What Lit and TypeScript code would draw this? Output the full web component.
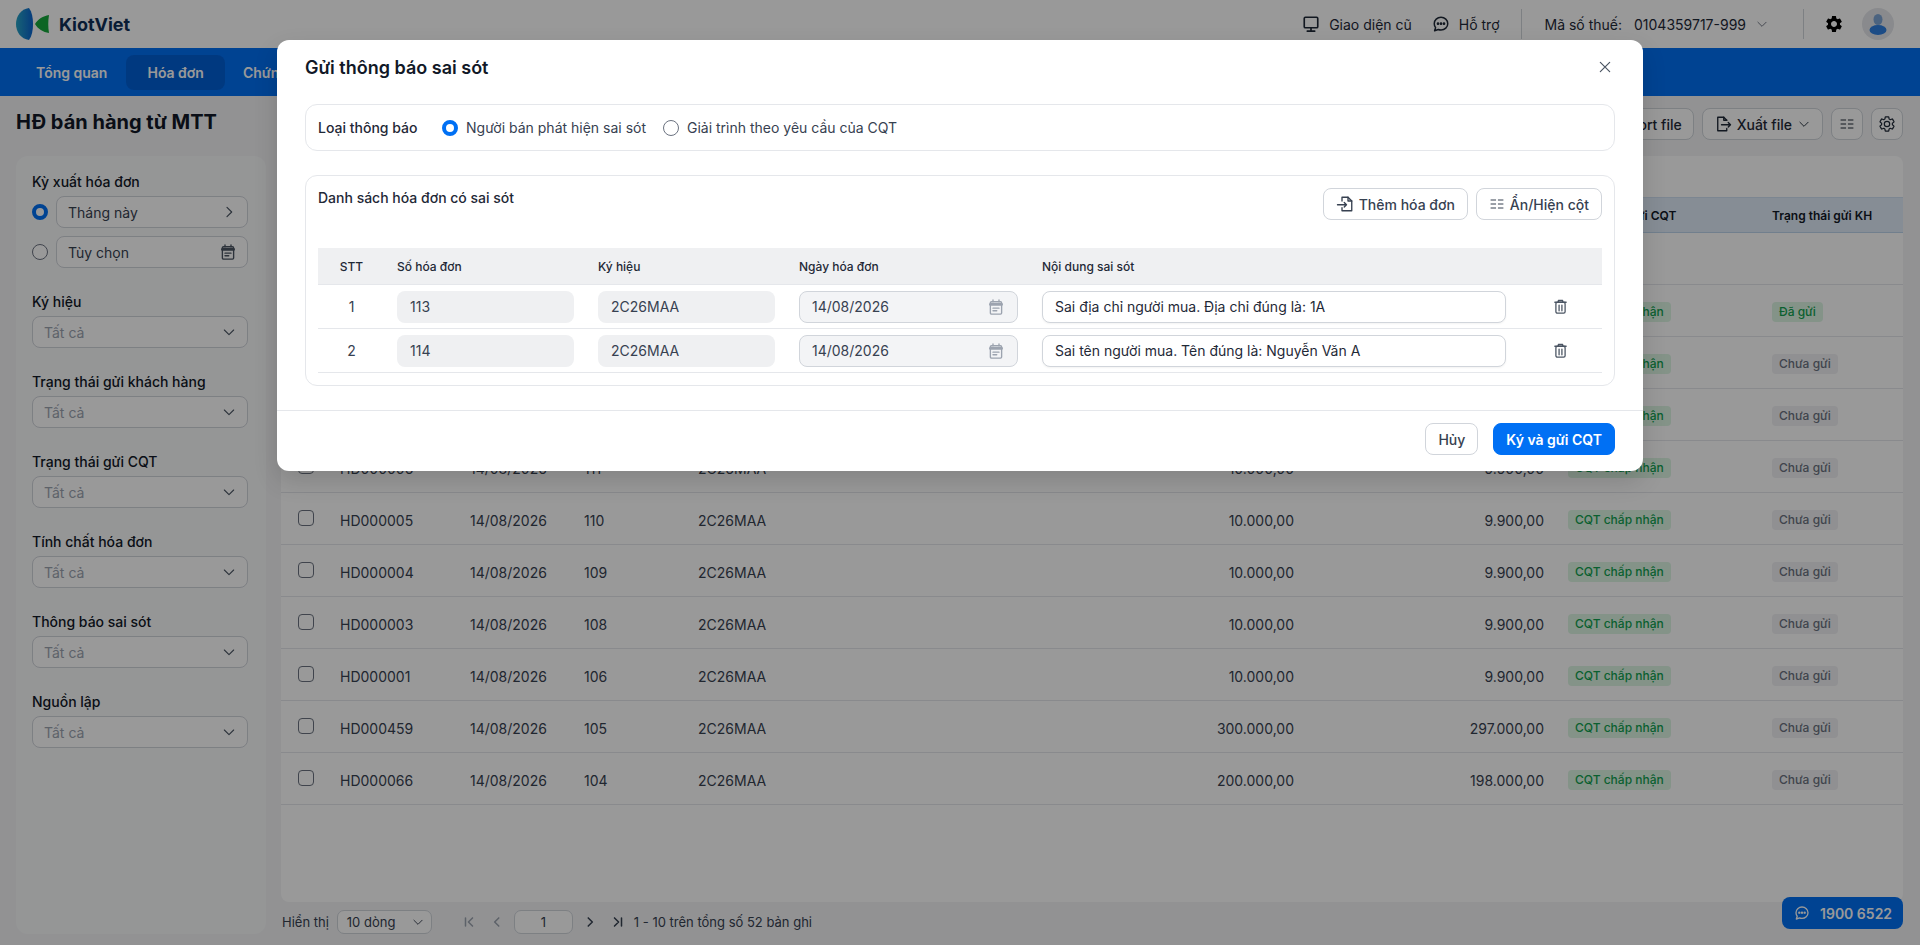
import { LitElement, html, css, svg } from "lit";
import { customElement } from "lit/decorators.js";

const icon = (size: number, body: unknown, fill = "none") => html`<svg
  width=${size} height=${size} viewBox="0 0 24 24" fill=${fill} stroke=${fill === "none" ? "currentColor" : "none"}
  stroke-width="1.8" stroke-linecap="round" stroke-linejoin="round">${body}</svg>`;

const chevronDown = svg`<path d="M5 9l7 7 7-7" stroke-width="1.6"/>`;
const chevronRight = svg`<path d="M9 5l7 7-7 7"/>`;
const chevronLeft = svg`<path d="M15 5l-7 7 7 7" stroke-width="2.6"/>`;
const chevronNext = svg`<path d="M9 5l7 7-7 7" stroke-width="2.6"/>`;
const calendar = svg`<rect x="4.5" y="5" width="15" height="16.5" rx="1.5"/><path d="M4.5 8.5h15" stroke-width="3.5"/><path d="M8 2.5v2.5M16 2.5v2.5"/><path d="M8 13.5h8M8 17h5"/>`;
const trash = svg`<path d="M4 6h16M9 6V3.5h6V6"/><rect x="5.5" y="6" width="13" height="15.5" rx="2"/><path d="M10 10v8M14 10v8"/>`;
const columns = svg`<path d="M3 6h7M14 6h7M3 12h7M14 12h7M3 18h7M14 18h7" stroke-width="1.5"/>`;
const fileIn = svg`<path d="M8 8V3h8l5 5v13H8v-4"/><path d="M16 3v5h5"/><path d="M2 13h12M11 10l3 3-3 3"/>`;
const fileOut = svg`<path d="M17 7l-4-4H5v18h12v-3"/><path d="M13 3v4h4"/><path d="M10 13h12M19 10l3 3-3 3"/>`;
const close = svg`<path d="M5 5l14 14M19 5L5 19"/>`;
const monitor = svg`<rect x="3" y="3" width="18" height="14" rx="1.5" stroke-width="2.2"/><path d="M12 17v4M7 21.5h10" stroke-width="2.2"/>`;
const chat = svg`<path d="M12 3c5 0 9 3.8 9 8.5S17 20 12 20c-1.3 0-2.500-.2-3.600-.7L3.500 21l1.300-4.200C3.700 15.300 3 13.500 3 11.500 3 6.800 7 3 12 3z" stroke-width="2"/><circle cx="8" cy="11.500" r=".9" fill="currentColor"/><circle cx="12" cy="11.500" r=".9" fill="currentColor"/><circle cx="16" cy="11.500" r=".9" fill="currentColor"/>`;
const gearPath = "M19.14 12.94c.04-.3.06-.61.06-.94 0-.32-.02-.64-.07-.94l2.03-1.58a.49.49 0 0 0 .12-.61l-1.92-3.32a.488.488 0 0 0-.59-.22l-2.39.96c-.5-.38-1.03-.7-1.62-.94l-.36-2.54a.484.484 0 0 0-.48-.41h-3.84c-.24 0-.43.17-.47.41l-.36 2.54c-.59.24-1.13.57-1.62.94l-2.39-.96c-.22-.08-.47 0-.59.22L2.74 8.87c-.12.21-.08.47.12.61l2.03 1.58c-.05.3-.09.63-.09.94s.02.64.07.94l-2.03 1.58a.49.49 0 0 0-.12.61l1.92 3.32c.12.22.37.29.59.22l2.39-.96c.5.38 1.03.7 1.62.94l.36 2.54c.05.24.24.41.48.41h3.84c.24 0 .44-.17.47-.41l.36-2.54c.59-.24 1.13-.56 1.62-.94l2.39.96c.22.08.47 0 .59-.22l1.92-3.32c.12-.22.07-.47-.12-.61l-2.01-1.58zM12 15.6c-1.98 0-3.6-1.62-3.6-3.6s1.62-3.6 3.6-3.6 3.6 1.62 3.6 3.6-1.62 3.6-3.6 3.6z";
const gearSolid = svg`<path fill-rule="evenodd" d=${gearPath}/>`;
const gearLine = svg`<path d=${gearPath} stroke-width="1.6"/>`;
const firstPage = svg`<path d="M6 5v14M18 5l-7 7 7 7" stroke-width="2.6"/>`;
const lastPage = svg`<path d="M18 5v14M6 5l7 7-7 7" stroke-width="2.6"/>`;

// first rows sit behind the dialog, only their status tags show
const invoices = [
  ["", "", "", "", "Đã gửi"],
  ["", "", "", "", "Chưa gửi"],
  ["", "", "", "", "Chưa gửi"],
  ["HD000006", "111", "10.000,00", "9.900,00", "Chưa gửi"],
  ["HD000005", "110", "10.000,00", "9.900,00", "Chưa gửi"],
  ["HD000004", "109", "10.000,00", "9.900,00", "Chưa gửi"],
  ["HD000003", "108", "10.000,00", "9.900,00", "Chưa gửi"],
  ["HD000001", "106", "10.000,00", "9.900,00", "Chưa gửi"],
  ["HD000459", "105", "300.000,00", "297.000,00", "Chưa gửi"],
  ["HD000066", "104", "200.000,00", "198.000,00", "Chưa gửi"],
];

const filters = ["Ký hiệu", "Trạng thái gửi khách hàng", "Trạng thái gửi CQT", "Tính chất hóa đơn", "Thông báo sai sót", "Nguồn lập"];

const errors = [
  ["1", "113", "Sai địa chỉ người mua. Địa chỉ đúng là: 1A"],
  ["2", "114", "Sai tên người mua. Tên đúng là: Nguyễn Văn A"],
];

@customElement("app-root")
export class AppRoot extends LitElement {
  static styles = css`
    :host {
      display: block;
      position: relative;
      width: 1920px;
      height: 945px;
      overflow: hidden;
      background: #f3f4f6;
      color: #1f2937;
      font-family: Inter, "Noto Sans", sans-serif;
      font-size: 14px;
    }
    svg { display: block; flex: none; }

    /* top bar */
    .top {
      height: 48px;
      background: #fff;
      display: flex;
      align-items: center;
      padding: 0 26px 0 16px;
    }
    .logo { display: flex; align-items: center; gap: 10px; }
    .logo-name { font-size: 18px; font-weight: 700; color: #0f2f57; }
    .top-right { margin-left: auto; display: flex; align-items: center; height: 100%; color: #1f2937; }
    .top-link { display: flex; align-items: center; gap: 9px; margin-right: 20px; }
    .top-link:nth-child(2) { margin-right: 21px; }
    .sep { width: 1px; height: 30px; background: #d1d5db; }
    .tax { display: flex; align-items: center; padding: 0 34px 0 23px; }
    .tax-no { margin-left: 12px; margin-right: 9px; color: #1f2937; }
    .tax svg { color: #6b7280; }
    .gear { margin: 0 18px 0 20px; color: #000; }
    .avatar {
      width: 32px; height: 32px; border-radius: 50%; background: #e5e7eb;
      display: flex; align-items: center; justify-content: center;
    }

    /* nav */
    .nav { height: 48px; background: #0070f4; display: flex; align-items: center; padding-left: 16px; gap: 20px; color: #fff; font-weight: 600; }
    .tab { height: 35px; padding: 0 20px; display: flex; align-items: center; border-radius: 8px; flex: none; }
    .tab.active { background: #0060d6; margin-left: -21px; margin-right: -22px; padding: 0 21px; }

    /* title row */
    .title-row { height: 60px; box-sizing: border-box; display: flex; align-items: flex-start; padding: 12px 17px 0 16px; }
    .page-title { font-size: 20px; font-weight: 700; line-height: 28px; color: #111827; }
    .tools { margin-left: auto; display: flex; gap: 8px; }
    .tool {
      height: 32px; box-sizing: border-box; border: 1px solid #d1d5db; border-radius: 8px; background: #fff;
      display: flex; align-items: center; gap: 5px; padding: 0 11px; font-weight: 500; color: #1f2937;
    }
    .tool.square { width: 32px; padding: 0; justify-content: center; }

    /* content */
    .content { display: grid; grid-template-columns: 250px 1622px; gap: 15px; padding: 0 16px; }
    .side { height: 778px; box-sizing: border-box; background: #f9fafb; border-radius: 12px; padding: 16px 18px 16px 16px; }
    .field-label { font-weight: 500; line-height: 20px; color: #111827; }
    .period { display: flex; align-items: center; gap: 8px; margin-top: 4px; }
    .period + .period { margin-top: 8px; }
    .radio { width: 16px; height: 16px; box-sizing: border-box; border-radius: 50%; border: 1px solid #6b7280; background: #fff; flex: none; }
    .radio.on { border: 4.5px solid #0070f4; }
    .select {
      height: 32px; box-sizing: border-box; border: 1px solid #d1d5db; border-radius: 8px; background: #fff;
      display: flex; align-items: center; justify-content: space-between; padding: 0 10px 0 11px; flex: 1;
      color: #374151;
    }
    .select.muted { color: #9ca3af; }
    .select svg { color: #4b5563; }
    .filter { margin-top: 24px; }
    .filter .select { margin-top: 4px; }

    .main { display: flex; flex-direction: column; }
    .panel { height: 746px; background: #fff; border-radius: 8px; box-sizing: border-box; padding-top: 41px; }
    .grid-row {
      display: grid;
      grid-template-columns: 59px 130px 114px 114px 200px 396px 250px 228px 131px;
      align-items: center;
      height: 52px;
      box-sizing: border-box;
      padding-top: 3px;
      border-bottom: 1px solid #e5e7eb;
      color: #374151;
    }
    .grid-row.head {
      height: 36px; padding-top: 0; background: #e0ecf8; border-top: 1px solid #cfe0f2; border-bottom: 1px solid #bcd4ec;
      font-size: 12px; font-weight: 600; color: #111827;
    }
    .right { text-align: right; }
    .pad { padding-left: 24px; }
    .check { width: 16px; height: 16px; box-sizing: border-box; border: 1px solid #6b7280; border-radius: 4px; background: #fff; margin: -5px 0 0 17px; }
    .tag { display: inline-block; height: 20px; line-height: 20px; padding: 0 7px; border-radius: 4px; font-size: 12px; font-weight: 500; white-space: nowrap; vertical-align: top; }
    .tag.ok { background: #dcf5e3; color: #12a150; }
    .tag.idle { background: #f0f1f3; color: #6b7280; }

    .pager { height: 32px; box-sizing: border-box; display: flex; align-items: center; font-size: 13px; color: #374151; padding: 7px 0 0 1px; }
    .pager .size {
      width: 95px; height: 24px; box-sizing: border-box; border: 1px solid #d1d5db; border-radius: 7px; margin-left: 8px;
      display: flex; align-items: center; justify-content: space-between; padding: 0 6px 0 9px; background: #fff;
    }
    .pg { display: flex; width: 14px; justify-content: center; color: #374151; }
    .pg.dim { color: #9ca3af; }
    .pg.first { margin-left: 30px; }
    .pg.prev { margin-left: 14px; }
    .pg.next { margin-left: 10px; }
    .pg.last { margin-left: 14px; }
    .pg-input {
      width: 59px; height: 24px; box-sizing: border-box; border: 1px solid #d1d5db; border-radius: 7px; margin-left: 10px;
      display: flex; align-items: center; justify-content: center; background: #fff;
    }
    .pg-total { margin-left: 9px; }
    .hotline {
      position: absolute; left: 1782px; top: 897px; width: 121px; height: 32px; border-radius: 8px;
      background: #0070f4; color: #fff; display: flex; align-items: center; gap: 10px; padding-left: 12px;
      box-sizing: border-box; font-weight: 600;
    }

    /* dialog */
    .overlay { position: absolute; inset: 0; background: rgba(0, 0, 0, 0.4); }
    .modal {
      position: absolute; left: 277px; top: 40px; width: 1366px; height: 431px; box-sizing: border-box;
      background: #fff; border-radius: 12px; box-shadow: 0 10px 25px rgba(0, 0, 0, 0.14);
      display: flex; flex-direction: column;
    }
    .modal-head { height: 64px; box-sizing: border-box; padding: 17px 28px 0; display: flex; justify-content: space-between; }
    .modal-title { font-size: 18px; font-weight: 600; line-height: 22px; color: #111827; }
    .modal-close { color: #4b5563; margin: 2px 2px 0 0; }
    .modal-body { padding: 0 28px; }
    .card { border: 1px solid #e5e7eb; border-radius: 12px; box-sizing: border-box; }
    .type-card { height: 47px; display: flex; align-items: center; padding: 0 12px; margin-bottom: 24px; }
    .type-label { font-weight: 500; color: #1f2937; width: 124px; }
    .opt { display: flex; align-items: center; gap: 8px; color: #374151; margin-right: 17px; }
    .list-card { height: 211px; padding: 12px; }
    .list-top { display: flex; justify-content: space-between; margin-bottom: 28px; height: 32px; }
    .list-title { font-weight: 500; line-height: 20px; font-size: 14px; color: #1f2937; }
    .list-actions { display: flex; gap: 8px; }
    .btn {
      height: 32px; box-sizing: border-box; border: 1px solid #d1d5db; border-radius: 8px; background: #fff;
      display: flex; align-items: center; gap: 5px; padding: 0 12px; font-weight: 500; color: #374151;
    }
    .row {
      display: grid; grid-template-columns: 67px 201px 201px 243px 488px 84px; align-items: center;
      box-sizing: border-box; height: 44px; border-bottom: 1px solid #e5e7eb; color: #374151;
    }
    .row.thead { height: 37px; background: #eff0f2; font-size: 12px; font-weight: 500; color: #1f2937; }
    .row > div { padding: 0 12px; }
    .row .num { padding: 0; text-align: center; }
    .cell-box {
      height: 32px; box-sizing: border-box; border-radius: 8px; display: flex; align-items: center;
      justify-content: space-between; padding: 0 13px;
    }
    .cell-box.ro { background: #eff0f2; }
    .cell-box.date { background: #f3f4f6; border: 1px solid #d1d5db; padding: 0 12px; }
    .cell-box.date svg { color: #9ca3af; }
    .cell-box.text { background: #fff; border: 1px solid #d1d5db; padding: 0 12px; box-shadow: 0 1px 2px rgba(0, 0, 0, 0.05); color: #1f2937; }
    .del { display: flex; justify-content: center; color: #4b5563; }
    .modal-foot {
      margin-top: 24px; border-top: 1px solid #e5e7eb; padding: 12px 28px 0; display: flex; justify-content: flex-end; gap: 15px;
    }
    .btn.primary { background: #0070f4; border-color: #0070f4; color: #fff; font-weight: 600; }
  `;

  private renderTop() {
    return html`
      <div class="top">
        <div class="logo">
          <svg width="33" height="32" viewBox="0 0 33 32">
            <defs>
              <linearGradient id="lens" x1="0" x2="1" y1="0" y2="0">
                <stop offset="0" stop-color="#28a4c4"/><stop offset="1" stop-color="#0a63d0"/>
              </linearGradient>
            </defs>
            <path fill="url(#lens)" d="M13 0C5 1 0 8 0 16c0 8 5 15 13 16 3-4 4-10 4-16S16 4 13 0z"/>
            <path fill="#16a83c" d="M19 16c3-5 8-8 14-9-1 6-1 12 0 18-6-1-11-4-14-9z"/>
          </svg>
          <span class="logo-name">KiotViet</span>
        </div>
        <div class="top-right">
          <div class="top-link">${icon(18, monitor)}<span>Giao diện cũ</span></div>
          <div class="top-link">${icon(18, chat)}<span>Hỗ trợ</span></div>
          <div class="sep"></div>
          <div class="tax">
            <span>Mã số thuế:</span><span class="tax-no">0104359717-999</span>${icon(14, chevronDown)}
          </div>
          <div class="sep"></div>
          <div class="gear">${icon(20, gearSolid, "currentColor")}</div>
          <div class="avatar">
            <svg width="20" height="22" viewBox="0 0 20 22">
              <ellipse cx="10" cy="6.500" rx="4.500" ry="5.500" fill="#7ea6d6"/>
              <ellipse cx="10" cy="17" rx="8.500" ry="5" fill="#2f7fe0"/>
            </svg>
          </div>
        </div>
      </div>
      <div class="nav">
        <div class="tab">Tổng quan</div>
        <div class="tab active">Hóa đơn</div>
        <div class="tab">Chứng từ</div>
      </div>`;
  }

  private renderSide() {
    return html`
      <aside class="side">
        <div class="field-label">Kỳ xuất hóa đơn</div>
        <div class="period">
          <span class="radio on"></span>
          <div class="select"><span>Tháng này</span>${icon(16, chevronRight)}</div>
        </div>
        <div class="period">
          <span class="radio"></span>
          <div class="select"><span>Tùy chọn</span>${icon(18, calendar)}</div>
        </div>
        ${filters.map(
          (f) => html`<div class="filter">
            <div class="field-label">${f}</div>
            <div class="select muted"><span>Tất cả</span>${icon(16, chevronDown)}</div>
          </div>`,
        )}
      </aside>`;
  }

  private renderTable() {
    return html`
      <div class="panel">
        <div class="grid-row head">
          <div></div><div></div><div></div><div></div><div></div><div></div><div></div>
          <div class="pad">Trạng thái gửi CQT</div><div>Trạng thái gửi KH</div>
        </div>
        <div class="grid-row"></div>
        ${invoices.map(
          (r) => html`<div class="grid-row">
            <div><div class="check"></div></div>
            <div>${r[0]}</div>
            <div>${r[0] ? "14/08/2026" : ""}</div>
            <div>${r[1]}</div>
            <div>${r[0] ? "2C26MAA" : ""}</div>
            <div class="right">${r[2]}</div>
            <div class="right">${r[3]}</div>
            <div class="pad"><span class="tag ok">CQT chấp nhận</span></div>
            <div><span class="tag ${r[4] === "Đã gửi" ? "ok" : "idle"}">${r[4]}</span></div>
          </div>`,
        )}
      </div>
      <div class="pager">
        <span>Hiển thị</span>
        <div class="size"><span>10 dòng</span>${icon(14, chevronDown)}</div>
        <span class="pg dim first">${icon(14, firstPage)}</span>
        <span class="pg dim prev">${icon(14, chevronLeft)}</span>
        <div class="pg-input">1</div>
        <span class="pg next">${icon(14, chevronNext)}</span>
        <span class="pg last">${icon(14, lastPage)}</span>
        <span class="pg-total">1 - 10 trên tổng số 52 bản ghi</span>
      </div>`;
  }

  private renderModal() {
    return html`
      <div class="overlay"></div>
      <div class="modal">
        <div class="modal-head">
          <div class="modal-title">Gửi thông báo sai sót</div>
          <div class="modal-close">${icon(16, close)}</div>
        </div>
        <div class="modal-body">
          <div class="card type-card">
            <span class="type-label">Loại thông báo</span>
            <div class="opt"><span class="radio on"></span>Người bán phát hiện sai sót</div>
            <div class="opt"><span class="radio"></span>Giải trình theo yêu cầu của CQT</div>
          </div>
          <div class="card list-card">
            <div class="list-top">
              <div class="list-title">Danh sách hóa đơn có sai sót</div>
              <div class="list-actions">
                <div class="btn">${icon(18, fileIn)}Thêm hóa đơn</div>
                <div class="btn">${icon(16, columns)}Ẩn/Hiện cột</div>
              </div>
            </div>
            <div class="row thead">
              <div class="num">STT</div><div>Số hóa đơn</div><div>Ký hiệu</div><div>Ngày hóa đơn</div><div>Nội dung sai sót</div><div></div>
            </div>
            ${errors.map(
              (e) => html`<div class="row">
                <div class="num">${e[0]}</div>
                <div><div class="cell-box ro">${e[1]}</div></div>
                <div><div class="cell-box ro">2C26MAA</div></div>
                <div><div class="cell-box date"><span>14/08/2026</span>${icon(18, calendar)}</div></div>
                <div><div class="cell-box text">${e[2]}</div></div>
                <div class="del">${icon(17, trash)}</div>
              </div>`,
            )}
          </div>
        </div>
        <div class="modal-foot">
          <div class="btn">Hủy</div>
          <div class="btn primary">Ký và gửi CQT</div>
        </div>
      </div>`;
  }

  render() {
    return html`
      ${this.renderTop()}
      <div class="title-row">
        <div class="page-title">HĐ bán hàng từ MTT</div>
        <div class="tools">
          <div class="tool">${icon(18, fileIn)}Import file</div>
          <div class="tool">${icon(18, fileOut)}Xuất file ${icon(14, chevronDown)}</div>
          <div class="tool square">${icon(16, columns)}</div>
          <div class="tool square">${icon(18, gearLine)}</div>
        </div>
      </div>
      <div class="content">
        ${this.renderSide()}
        <div class="main">${this.renderTable()}</div>
      </div>
      <div class="hotline">${icon(16, chat)}<span>1900 6522</span></div>
      ${this.renderModal()}
    `;
  }
}
